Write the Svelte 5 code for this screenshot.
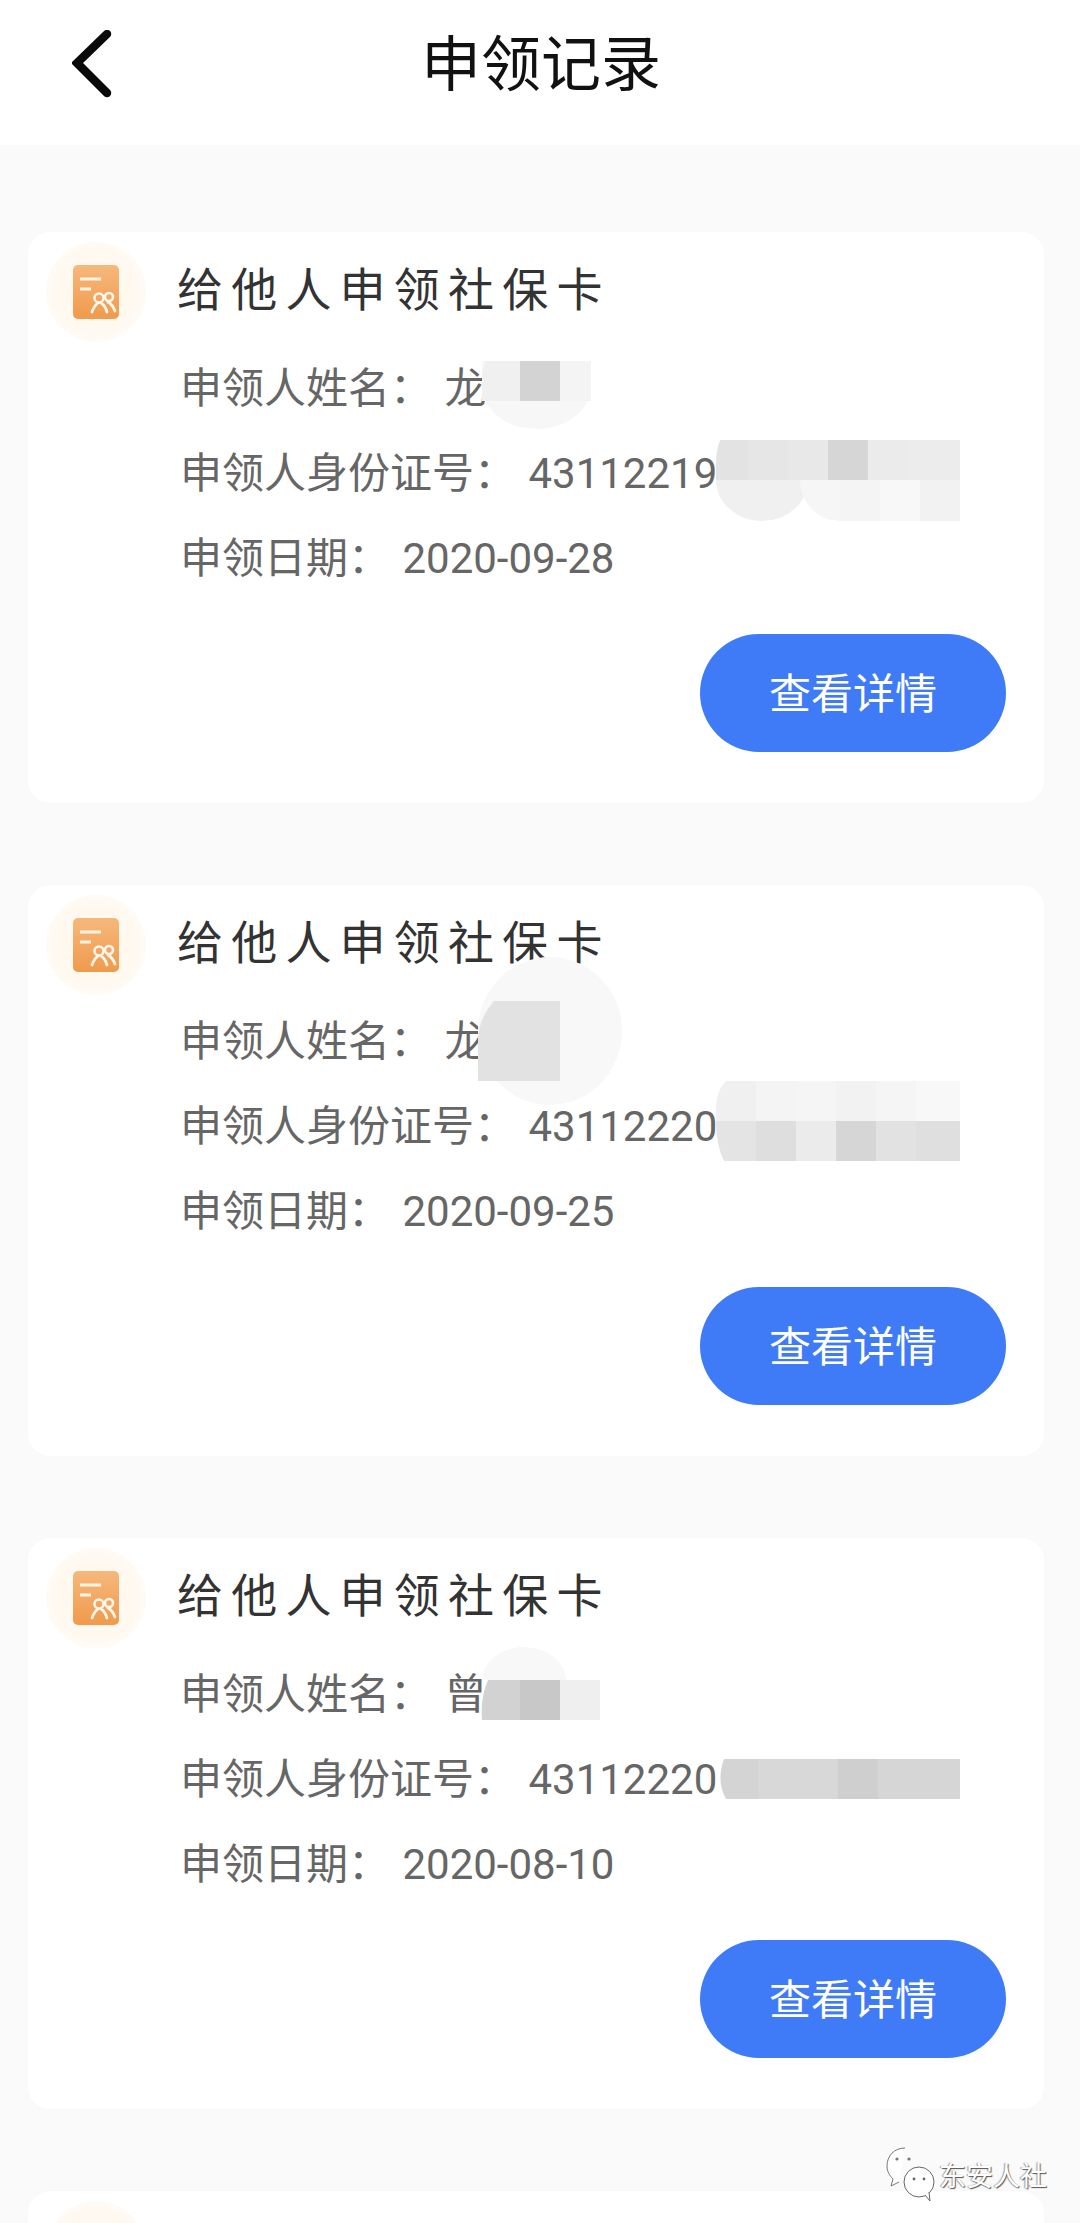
<script>
  // mosaics are in card coordinates, since they sit over the text as redaction blocks
  const records = [
    {
      name: "龙", id: "43112219", date: "2020-09-28",
      blobs: [
        { d: "M454 129h109v30a55 44 0 0 1-109 0z", fill: "#f7f7f7" },
        { d: "M688 248h92a46 41 0 0 1-92 0z", fill: "#f0f0f0" },
        { d: "M772 248h80a40 41 0 0 1-80 0z", fill: "#f6f6f6" },
        { d: "M692 208h28v40h-32v-14q0-16 4-26z", fill: "#e3e3e3" },
        { d: "M458 129h34v40h-38v-22q0-10 4-18z", fill: "#f0f0f0" }
      ],
      tiles: [
        [492, 129, 40, 40, "#d3d3d3"], [532, 129, 31, 40, "#f4f4f4"],
        [720, 208, 40, 40, "#e6e6e6"], [760, 208, 40, 40, "#e8e8e8"],
        [800, 208, 40, 40, "#d6d6d6"], [840, 208, 40, 40, "#ebebeb"], [880, 208, 52, 40, "#ececec"],
        [812, 248, 40, 41, "#f4f4f4"], [852, 248, 40, 41, "#f8f8f8"], [892, 248, 40, 41, "#f2f2f2"]
      ]
    },
    {
      name: "龙", id: "43112220", date: "2020-09-25",
      blobs: [
        { d: "M522 72a72 74 0 1 1 0 148a72 74 0 1 1 0-148z", fill: "#f8f8f8" },
        { d: "M466 116h66v80h-82v-40q0-22 16-40z", fill: "#e2e2e2" },
        { d: "M698 196h30v40h-40v-12q0-18 10-28z", fill: "#f0f0f0" },
        { d: "M688 236h40v40h-32q-8-16-8-40z", fill: "#e4e4e4" }
      ],
      tiles: [
        [728, 196, 40, 40, "#f4f4f4"], [768, 196, 40, 40, "#f5f5f5"],
        [808, 196, 40, 40, "#f2f2f2"], [848, 196, 40, 40, "#f5f5f5"], [888, 196, 44, 40, "#f8f8f8"],
        [728, 236, 40, 40, "#dedede"], [768, 236, 40, 40, "#ebebeb"],
        [808, 236, 40, 40, "#d6d6d6"], [848, 236, 40, 40, "#e2e2e2"], [888, 236, 44, 40, "#dfdfdf"]
      ]
    },
    {
      name: "曾", id: "43112220", date: "2020-08-10",
      blobs: [
        { d: "M454 142a42 33 0 0 1 84 0z", fill: "#f8f8f8" },
        { d: "M460 142h32v40h-38q-2-22 6-40z", fill: "#d2d2d2" },
        { d: "M696 221h34v40h-32q-10-18-2-40z", fill: "#d4d4d4" }
      ],
      tiles: [
        [492, 142, 40, 40, "#c8c8c8"], [532, 142, 40, 40, "#efefef"],
        [730, 221, 80, 40, "#d8d8d8"], [810, 221, 40, 40, "#cfcfcf"],
        [850, 221, 82, 40, "#d6d6d6"]
      ]
    }
  ];
</script>

{#snippet cardIcon(uid)}
  <div class="halo">
    <svg width="46" height="54" viewBox="0 0 46 54">
      <defs>
        <linearGradient id={uid} x1="0" y1="0" x2="0" y2="1">
          <stop offset="0" stop-color="#f6b87c" />
          <stop offset="1" stop-color="#f09a4c" />
        </linearGradient>
      </defs>
      <rect width="46" height="54" rx="5" fill="url(#{uid})" />
      <path d="M7 14h21M7 24h11" stroke="#fff3e4" stroke-width="3" fill="none" />
      <circle cx="26" cy="33" r="4.5" fill="none" stroke="#fff6ec" stroke-width="2.6" />
      <circle cx="36" cy="32" r="4" fill="none" stroke="#fff6ec" stroke-width="2.6" />
      <path d="M25 38q-4 3-6 9M28 38q4 2 6 9M35 37q5 3 7 9" fill="none" stroke="#fff6ec" stroke-width="2.8" stroke-linecap="round" />
    </svg>
  </div>
{/snippet}

<div class="page">
  <header class="topbar">
    <svg class="back" width="40" height="68" viewBox="0 0 40 68">
      <path d="M35 4 L5 33 L35 63" fill="none" stroke="#0a0a0a" stroke-width="8.5" stroke-linecap="round" stroke-linejoin="miter" />
    </svg>
    <h1>申领记录</h1>
  </header>

  <main class="list">
    {#each records as rec, i}
      <section class="card">
        <div class="head">
          {@render cardIcon("ico" + i)}
          <h2>给他人申领社保卡</h2>
        </div>
        <div class="rows">
          <p>申领人姓名： {rec.name}</p>
          <p>申领人身份证号： {rec.id}</p>
          <p>申领日期： {rec.date}</p>
        </div>
        <div class="actions">
          <button type="button"><span>查看详情</span></button>
        </div>
        <svg class="mosaic" width="1016" height="400" viewBox="0 0 1016 400">
          {#each rec.blobs as b}
            <path d={b.d} fill={b.fill} />
          {/each}
          {#each rec.tiles as t}
            <rect x={t[0]} y={t[1]} width={t[2]} height={t[3]} fill={t[4]} />
          {/each}
        </svg>
      </section>
    {/each}
    <section class="card">
      <div class="head">
        {@render cardIcon("ico3")}
      </div>
    </section>
  </main>

  <div class="watermark">
    <svg width="50" height="56" viewBox="0 0 50 56">
      <path d="M20 2C9 2 2 10 2 20c0 6 3 10 6 13l-2 7 8-4" fill="rgba(255,255,255,.85)" stroke="#777" stroke-width="1" />
      <ellipse cx="34" cy="36" rx="15" ry="15" fill="rgba(255,255,255,.9)" stroke="#666" stroke-width="1" />
      <path d="M40 49l5 6-1-9" fill="#fff" stroke="#666" stroke-width="1" />
      <circle cx="12" cy="13" r="1.6" fill="#777" /><circle cx="24" cy="13" r="1.6" fill="#777" />
      <circle cx="29" cy="33" r="1.4" fill="#666" /><circle cx="39" cy="33" r="1.4" fill="#666" />
    </svg>
    <span>东安人社</span>
  </div>
</div>

<style>
  :global(body) {
    margin: 0;
    background: #fafafa;
  }

  .page {
    position: relative;
    height: 2223px;
    overflow: hidden;
    background: #fafafa;
    font-family: Roboto, "Noto Sans CJK SC", sans-serif;
  }

  .topbar {
    position: relative;
    height: 145px;
    background: #fff;
    display: flex;
    align-items: center;
    justify-content: center;
  }

  .back {
    position: absolute;
    left: 72px;
    top: 30px;
  }

  h1 {
    margin: 0 0 14px 2px;
    font-size: 60px;
    font-weight: 400;
    color: #111;
    line-height: 1.2;
  }

  .list {
    padding: 87px 36px 0 28px;
    display: flex;
    flex-direction: column;
    gap: 82px;
  }

  .card {
    position: relative;
    height: 571px;
    flex: none;
    box-sizing: border-box;
    padding: 10px 38px 0 18px;
    background: #fff;
    border-radius: 22px;
    box-shadow: 0 0 6px rgba(0, 0, 0, 0.012);
  }

  .head {
    display: flex;
    align-items: center;
    gap: 31px;
  }

  .halo {
    width: 100px;
    height: 100px;
    flex: none;
    border-radius: 50%;
    background: radial-gradient(circle, #fff6ea 0%, #fff9f1 60%, #fffdfb 88%, #fff 100%);
    display: flex;
    align-items: center;
    justify-content: center;
  }

  h2 {
    margin: 0 0 2px 0;
    font-size: 46px;
    font-weight: 400;
    letter-spacing: 8.2px;
    color: #333;
    line-height: 1.2;
  }

  .rows {
    margin: 4px 0 0 134px;
  }

  .rows p {
    margin: 0;
    height: 85px;
    line-height: 85px;
    font-size: 42px;
    color: #666;
    white-space: pre;
    word-spacing: 2px;
  }

  .actions {
    margin-top: 33px;
    display: flex;
    justify-content: flex-end;
  }

  button {
    width: 306px;
    height: 118px;
    padding: 0 0 5px;
    border: 0;
    border-radius: 59px;
    background: #3f7bf6;
    color: #fff;
    font: inherit;
    font-size: 42px;
  }

  .mosaic {
    position: absolute;
    left: 0;
    top: 0;
    pointer-events: none;
  }

  .watermark {
    position: absolute;
    left: 885px;
    top: 2146px;
    display: flex;
    align-items: center;
    gap: 4px;
  }

  .watermark span {
    font-size: 27px;
    color: #fff;
    white-space: nowrap;
    text-shadow: 1px 1px 1px #555, -1px 0 1px #999;
  }
</style>
